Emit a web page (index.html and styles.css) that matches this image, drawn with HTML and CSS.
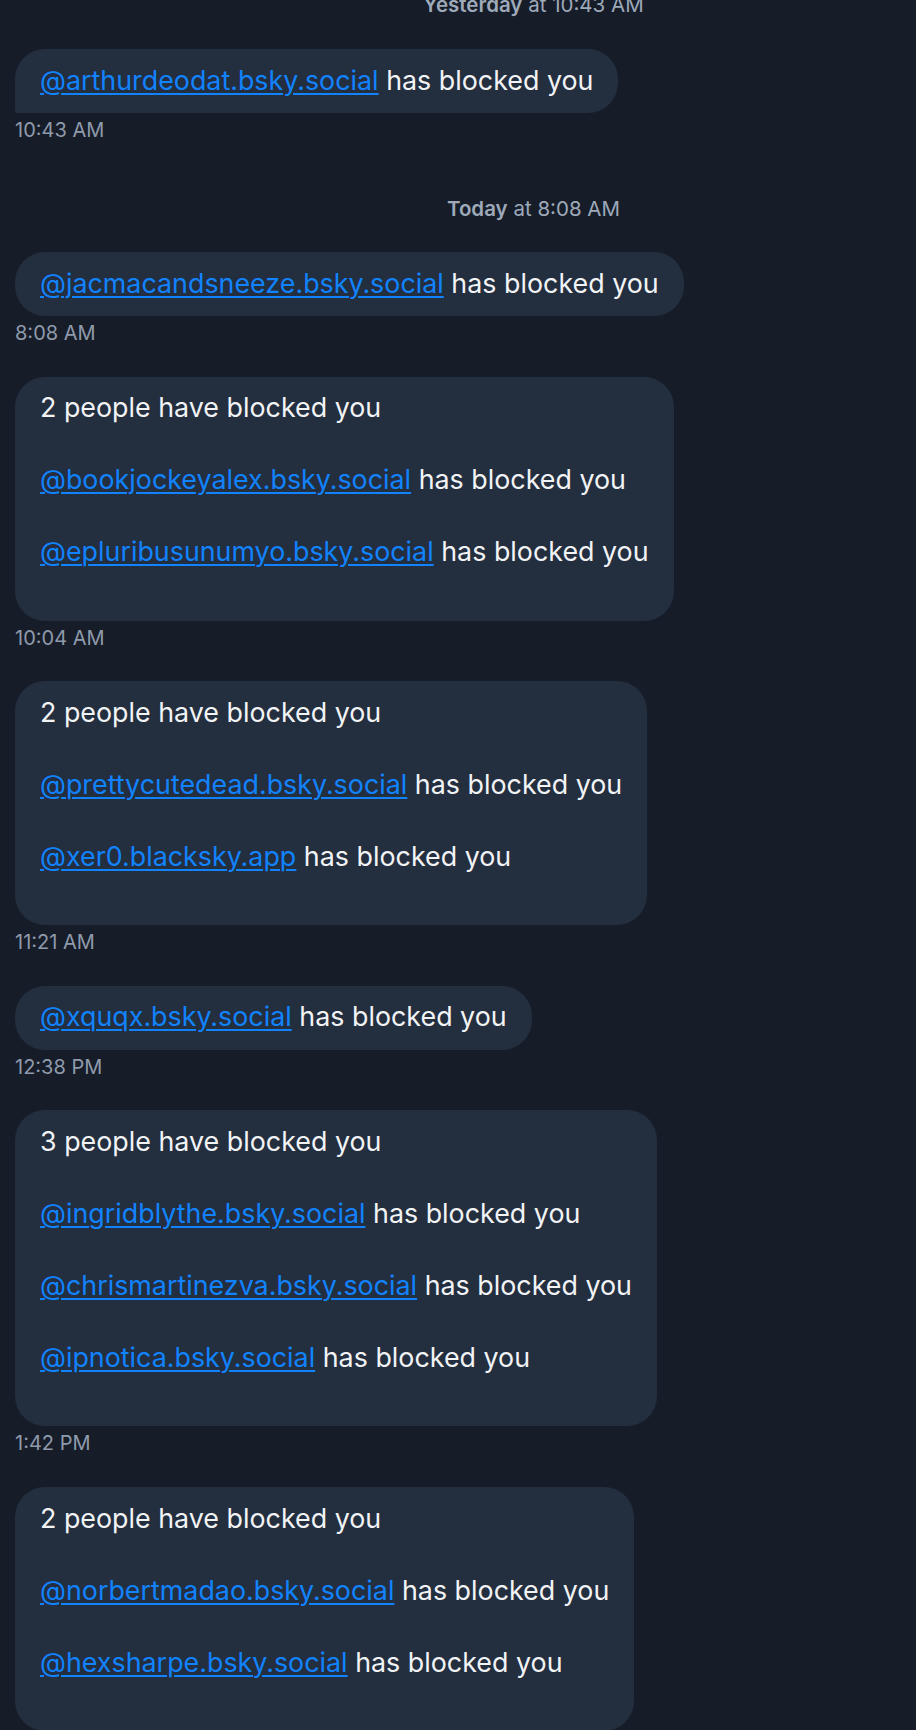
FILE: index.html
```html
<!DOCTYPE html>
<html>
<head>
<meta charset="utf-8">
<link rel="stylesheet" href="styles.css">
</head>
<body>
<div class="chat">
  <div class="day day-first"><b>Yesterday</b> at 10:43 AM</div>
  <div class="msg">
    <div class="bubble tail"><div class="line"><a href="#">@arthurdeodat.bsky.social</a> has blocked you</div></div>
    <div class="time">10:43 AM</div>
  </div>

  <div class="day"><b>Today</b> at 8:08 AM</div>
  <div class="msg">
    <div class="bubble"><div class="line"><a href="#">@jacmacandsneeze.bsky.social</a> has blocked you</div></div>
    <div class="time">8:08 AM</div>
  </div>

  <div class="msg">
    <div class="bubble multi">
      <div class="line">2 people have blocked you</div>
      <div class="line"><a href="#">@bookjockeyalex.bsky.social</a> has blocked you</div>
      <div class="line"><a href="#">@epluribusunumyo.bsky.social</a> has blocked you</div>
    </div>
    <div class="time">10:04 AM</div>
  </div>

  <div class="msg">
    <div class="bubble multi">
      <div class="line">2 people have blocked you</div>
      <div class="line"><a href="#">@prettycutedead.bsky.social</a> has blocked you</div>
      <div class="line"><a href="#">@xer0.blacksky.app</a> has blocked you</div>
    </div>
    <div class="time">11:21 AM</div>
  </div>

  <div class="msg">
    <div class="bubble"><div class="line"><a href="#">@xquqx.bsky.social</a> has blocked you</div></div>
    <div class="time">12:38 PM</div>
  </div>

  <div class="msg">
    <div class="bubble multi">
      <div class="line">3 people have blocked you</div>
      <div class="line"><a href="#">@ingridblythe.bsky.social</a> has blocked you</div>
      <div class="line"><a href="#">@chrismartinezva.bsky.social</a> has blocked you</div>
      <div class="line"><a href="#">@ipnotica.bsky.social</a> has blocked you</div>
    </div>
    <div class="time">1:42 PM</div>
  </div>

  <div class="msg">
    <div class="bubble multi">
      <div class="line">2 people have blocked you</div>
      <div class="line"><a href="#">@norbertmadao.bsky.social</a> has blocked you</div>
      <div class="line"><a href="#">@hexsharpe.bsky.social</a> has blocked you</div>
    </div>
  </div>
</div>
</body>
</html>
```

FILE: styles.css
```css
html, body {
  margin: 0;
  padding: 0;
  background: #161d29;
  overflow: hidden;
}
body {
  font-family: Inter, "Noto Sans", sans-serif;
  color: #f1f3f5;
}
.chat {
  display: flex;
  flex-direction: column;
  padding: 0 15px;
}
.day {
  font-size: 20.5px;
  line-height: 26px;
  color: #9ea9b9;
  text-align: center;
  padding-left: 151px;
  margin-top: 22.5px;
  margin-bottom: 30px;
}
.day b {
  font-weight: 600;
}
.day-first {
  margin-top: -8px;
  margin-bottom: 31px;
}
.msg {
  display: flex;
  flex-direction: column;
  align-items: flex-start;
  margin-bottom: 30.6px;
}
.bubble {
  background: #232e3f;
  border-radius: 30px;
  padding: 12.5px 25px 15.5px;
  font-size: 26.85px;
  line-height: 36px;
  display: flex;
  flex-direction: column;
  gap: 36px;
}
.bubble.tail {
  border-bottom-left-radius: 2px;
}
.bubble.multi {
  padding-bottom: 51.5px;
}
.line {
  white-space: nowrap;
}
.bubble a {
  color: #1283fe;
  text-decoration: underline;
  text-underline-offset: 3px;
  text-decoration-thickness: 2px;
}
.time {
  margin-top: 4px;
  font-size: 20px;
  line-height: 26px;
  color: #8f9aab;
}
```
